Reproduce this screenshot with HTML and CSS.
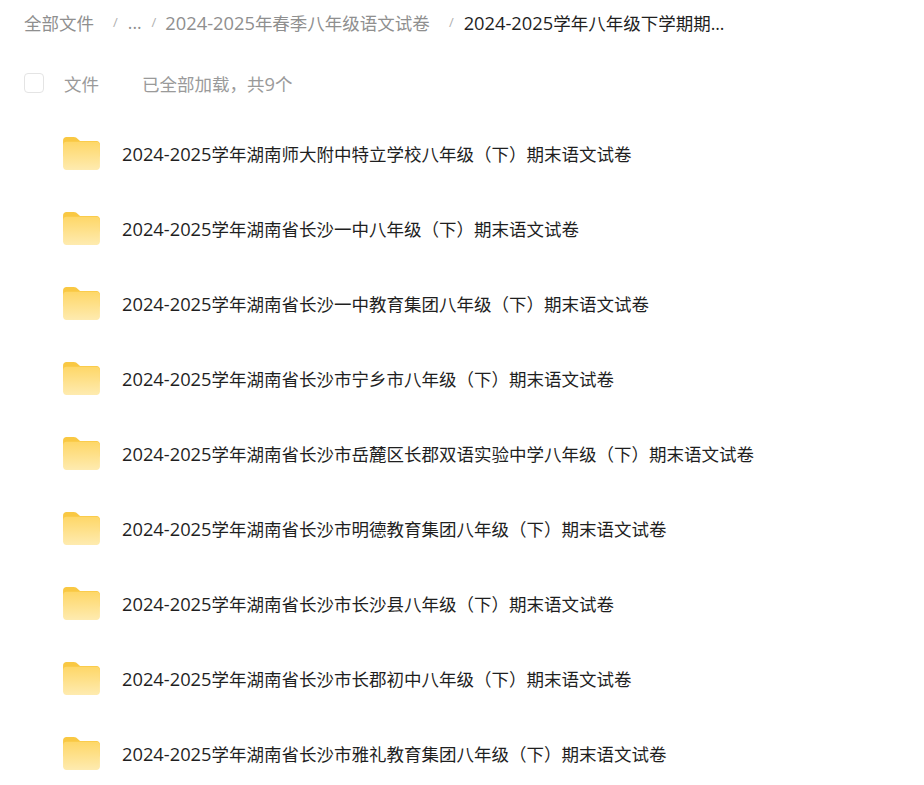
FILE: index.html
```html
<!DOCTYPE html>
<html lang="zh-CN">
<head>
    <meta charset="UTF-8">
    <title>全部文件</title>
    <link rel="stylesheet" href="styles.css">
</head>
<body>
    <svg class="defs" width="0" height="0">
        <defs>
            <linearGradient id="folder-front" x1="0" y1="0" x2="0" y2="1">
                <stop offset="0" stop-color="#fed768"/>
                <stop offset="1" stop-color="#feebb0"/>
            </linearGradient>
            <symbol id="folder" viewBox="0 0 38 34">
                <path d="M0 3.5C0 1.5 1.5 0 3.5 0H11C13 0 14 .8 15.2 2L17.5 4H34.500C36.500 4 38 5.500 38 7.500V20H0Z" fill="#f9c843"/>
                <path d="M0 8.500C0 6.800 1.300 5 3.500 5H34.500C36.500 5 38 6.500 38 8.500V30.500C38 32.500 36.500 34 34.500 34H3.500C1.500 34 0 32.500 0 30.500Z" fill="url(#folder-front)"/>
            </symbol>
        </defs>
    </svg>

    <!-- breadcrumb -->
    <div class="crumbs">
        <span class="crumb">全部文件</span>
        <span class="sep sep-first">/</span>
        <span class="crumb">...</span>
        <span class="sep sep-tight">/</span>
        <span class="crumb"><span class="num">2024-2025</span>年春季八年级语文试卷</span>
        <span class="sep sep-first">/</span>
        <span class="crumb crumb-current"><span class="num">2024-2025</span>学年八年级下学期期...</span>
    </div>

    <!-- list header -->
    <div class="list-head">
        <span class="checkbox"></span>
        <span class="head-label">文件</span>
        <span class="head-count">已全部加载，共<span class="num">9</span>个</span>
    </div>

    <!-- files -->
    <ul class="file-list">
        <li class="file-row"><svg class="folder-icon"><use href="#folder"/></svg><span class="file-name"><span class="num">2024-2025</span>学年湖南师大附中特立学校八年级（下）期末语文试卷</span></li>
        <li class="file-row"><svg class="folder-icon"><use href="#folder"/></svg><span class="file-name"><span class="num">2024-2025</span>学年湖南省长沙一中八年级（下）期末语文试卷</span></li>
        <li class="file-row"><svg class="folder-icon"><use href="#folder"/></svg><span class="file-name"><span class="num">2024-2025</span>学年湖南省长沙一中教育集团八年级（下）期末语文试卷</span></li>
        <li class="file-row"><svg class="folder-icon"><use href="#folder"/></svg><span class="file-name"><span class="num">2024-2025</span>学年湖南省长沙市宁乡市八年级（下）期末语文试卷</span></li>
        <li class="file-row"><svg class="folder-icon"><use href="#folder"/></svg><span class="file-name"><span class="num">2024-2025</span>学年湖南省长沙市岳麓区长郡双语实验中学八年级（下）期末语文试卷</span></li>
        <li class="file-row"><svg class="folder-icon"><use href="#folder"/></svg><span class="file-name"><span class="num">2024-2025</span>学年湖南省长沙市明德教育集团八年级（下）期末语文试卷</span></li>
        <li class="file-row"><svg class="folder-icon"><use href="#folder"/></svg><span class="file-name"><span class="num">2024-2025</span>学年湖南省长沙市长沙县八年级（下）期末语文试卷</span></li>
        <li class="file-row"><svg class="folder-icon"><use href="#folder"/></svg><span class="file-name"><span class="num">2024-2025</span>学年湖南省长沙市长郡初中八年级（下）期末语文试卷</span></li>
        <li class="file-row"><svg class="folder-icon"><use href="#folder"/></svg><span class="file-name"><span class="num">2024-2025</span>学年湖南省长沙市雅礼教育集团八年级（下）期末语文试卷</span></li>
    </ul>
</body>
</html>
```

FILE: styles.css
```css
body {
    margin: 0;
    background: #fff;
    font-family: "Open Sans", "Noto Sans CJK SC", sans-serif;
    font-size: 17.5px;
    color: #1f1f1f;
    overflow: hidden;
}

.defs {
    display: block;
    height: 0;
}

.num {
    font-size: 18.3px;
}

.crumbs {
    display: flex;
    align-items: center;
    height: 24px;
    padding: 10px 0 0 24px;
    color: #8f8f8f;
    white-space: nowrap;
}

.crumb-current {
    color: #1f1f1f;
}

.sep {
    color: #b0b0b0;
    font-size: 13px;
}

.sep-first {
    margin: 0 10px 0 19px;
}

.sep-tight {
    margin: 0 9px 0 10px;
}

.list-head {
    display: flex;
    align-items: center;
    height: 24px;
    margin-top: 37px;
    padding-left: 24px;
    color: #9a9a9a;
}

.checkbox {
    width: 18px;
    height: 18px;
    border: 1px solid #e4e4e4;
    border-radius: 4px;
}

.head-label {
    margin-left: 20px;
}

.head-count {
    margin-left: 43px;
}

.file-list {
    list-style: none;
    margin: 21px 0 0;
    padding: 0 0 0 63px;
}

.file-row {
    display: flex;
    align-items: center;
    height: 75px;
    white-space: nowrap;
}

.folder-icon {
    width: 37px;
    height: 33px;
    margin-right: 22px;
    flex: none;
}
```
